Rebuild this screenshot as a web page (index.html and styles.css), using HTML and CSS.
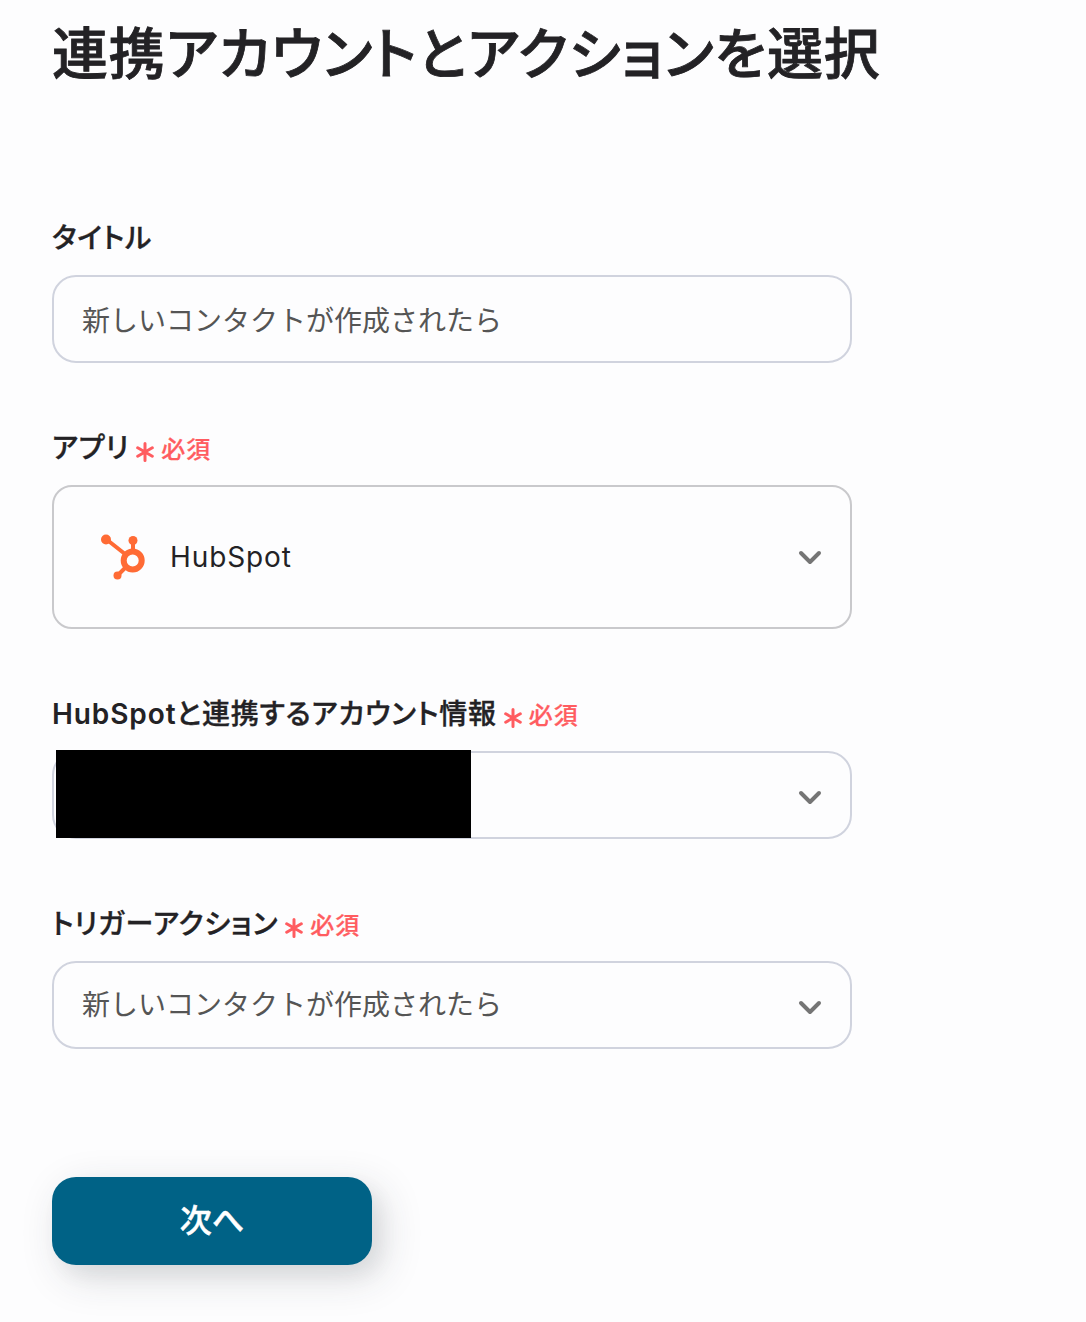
FILE: index.html
```html
<!DOCTYPE html>
<html lang="ja">
<head>
<meta charset="utf-8">
<title>連携アカウントとアクションを選択</title>
<link rel="stylesheet" href="styles.css">
</head>
<body>
<main class="page">
  <h1 class="heading">連携アカウントとアクションを選択</h1>
  <section class="field">
    <div class="label"><span>タイトル</span></div>
    <div class="control"><span class="value">新しいコンタクトが作成されたら</span></div>
  </section>
  <section class="field">
    <div class="label"><span>アプリ</span><span class="required"><svg class="star" viewBox="0 0 18 20"><path d="M9 1.500v17M1.700 5.800l14.600 8.400M16.300 5.800l-14.600 8.400"/></svg>必須</span></div>
    <div class="control control-app">
      <svg class="hubspot" viewBox="0 0 44 46"><path class="arm" d="M5 5l19 15M32 6v12M25 33l-9 9"/><circle class="ring" cx="31.700" cy="26.500" r="9"/><circle cx="5" cy="5.500" r="5"/><circle cx="32" cy="6.500" r="4.5"/><circle cx="16.500" cy="41.500" r="4"/></svg>
      <span class="app-name">HubSpot</span>
      <svg class="chevron" viewBox="0 0 24 16"><path d="M3 3l9 9 9-9"/></svg>
    </div>
  </section>
  <section class="field">
    <div class="label"><span><span class="latin">HubSpot</span>と連携するアカウント情報</span><span class="required"><svg class="star" viewBox="0 0 18 20"><path d="M9 1.500v17M1.700 5.800l14.600 8.400M16.300 5.800l-14.600 8.400"/></svg>必須</span></div>
    <div class="control"><span class="mask"></span><svg class="chevron" viewBox="0 0 24 16"><path d="M3 3l9 9 9-9"/></svg></div>
  </section>
  <section class="field">
    <div class="label"><span>トリガーアクション</span><span class="required"><svg class="star" viewBox="0 0 18 20"><path d="M9 1.500v17M1.700 5.800l14.600 8.400M16.300 5.800l-14.600 8.400"/></svg>必須</span></div>
    <div class="control"><span class="value value-select">新しいコンタクトが作成されたら</span><svg class="chevron" viewBox="0 0 24 16"><path d="M3 3l9 9 9-9"/></svg></div>
  </section>
  <button class="next" type="button">次へ</button>
</main>
</body>
</html>
```
FILE: styles.css
```css
* { box-sizing: border-box; }
body { margin: 0; background: #fdfdfe; color: #232225; font-family: Inter, "Noto Sans CJK JP", sans-serif; }
.page { height: 1322px; padding: 14px 52px 0; overflow: hidden; }
.heading { margin: 0 0 121px; height: 80px; line-height: 80px; font-size: 56px; font-weight: 500; letter-spacing: .85px; white-space: nowrap; font-feature-settings: "palt"; -webkit-text-stroke: .8px currentColor; }
.field { width: 800px; margin-bottom: 62px; }
.label { display: flex; align-items: center; height: 41px; margin-bottom: 19px; font-size: 28px; font-weight: 500; letter-spacing: .8px; white-space: nowrap; font-feature-settings: "palt"; -webkit-text-stroke: .35px currentColor; }
.latin { font-weight: 600; letter-spacing: .9px; -webkit-text-stroke-width: 0; }
.required { display: flex; align-items: center; margin: 3px 0 0 7px; color: #ff5c60; font-size: 24px; letter-spacing: 1px; -webkit-text-stroke-width: .2px; }
.star { width: 18px; height: 20px; margin: 9px 7px 0 0; fill: none; stroke: currentColor; stroke-width: 3; stroke-linecap: round; }
.control { position: relative; display: flex; align-items: center; height: 88px; padding: 0 28px; border: 2px solid #d0d3de; border-radius: 24px; }
.control-app { height: 144px; padding-left: 47px; border-radius: 20px; border-color: #c9c9cc; }
.value { color: #555; font-size: 28px; }
.value-select { padding: 0 0 4px; }
.chevron { width: 24px; height: 16px; margin: 5px 0 0 auto; fill: none; stroke: #757575; stroke-width: 4; stroke-linecap: round; stroke-linejoin: round; }
.control-app .chevron { margin-top: 1px; }
.hubspot { width: 44px; height: 46px; margin-right: 25px; fill: #ff6b35; }
.hubspot .arm { fill: none; stroke: #ff6b35; stroke-width: 4; }
.hubspot .ring { fill: none; stroke: #ff6b35; stroke-width: 6; }
.app-name { font-size: 28px; letter-spacing: .9px; }
.mask { position: absolute; left: 2px; top: -3px; width: 415px; height: 88px; background: #000; }
.next { display: block; width: 320px; height: 88px; margin-top: 128px; padding: 0 0 7px; border: 0; border-radius: 24px; background: #006286; color: #fff; font: inherit; font-size: 32px; font-weight: 500; font-feature-settings: "palt"; -webkit-text-stroke: .5px currentColor; box-shadow: 10px 12px 40px rgba(40,45,60,.17), 8px 10px 20px rgba(0,30,40,.05); }
```
